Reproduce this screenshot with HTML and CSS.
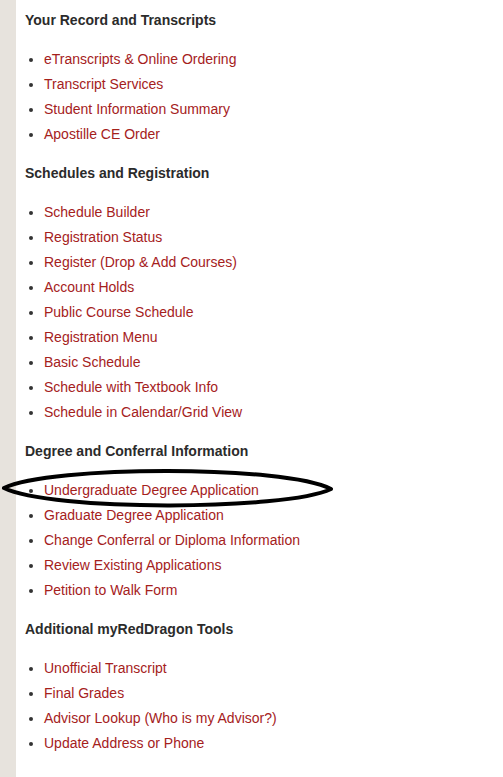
FILE: index.html
```html
<!DOCTYPE html>
<html>
<head>
<meta charset="utf-8">
<link rel="stylesheet" href="styles.css">
</head>
<body>
<div class="page">
  <div class="strip"></div>
  <div class="content">
    <h3 class="heading">Your Record and Transcripts</h3>
    <ul class="links">
      <li><a href="#">eTranscripts &amp; Online Ordering</a></li>
      <li><a href="#">Transcript Services</a></li>
      <li><a href="#">Student Information Summary</a></li>
      <li><a href="#">Apostille CE Order</a></li>
    </ul>
    <h3 class="heading">Schedules and Registration</h3>
    <ul class="links">
      <li><a href="#">Schedule Builder</a></li>
      <li><a href="#">Registration Status</a></li>
      <li><a href="#">Register (Drop &amp; Add Courses)</a></li>
      <li><a href="#">Account Holds</a></li>
      <li><a href="#">Public Course Schedule</a></li>
      <li><a href="#">Registration Menu</a></li>
      <li><a href="#">Basic Schedule</a></li>
      <li><a href="#">Schedule with Textbook Info</a></li>
      <li><a href="#">Schedule in Calendar/Grid View</a></li>
    </ul>
    <h3 class="heading">Degree and Conferral Information</h3>
    <ul class="links">
      <li><a href="#">Undergraduate Degree Application</a></li>
      <li><a href="#">Graduate Degree Application</a></li>
      <li><a href="#">Change Conferral or Diploma Information</a></li>
      <li><a href="#">Review Existing Applications</a></li>
      <li><a href="#">Petition to Walk Form</a></li>
    </ul>
    <h3 class="heading">Additional myRedDragon Tools</h3>
    <ul class="links">
      <li><a href="#">Unofficial Transcript</a></li>
      <li><a href="#">Final Grades</a></li>
      <li><a href="#">Advisor Lookup (Who is my Advisor?)</a></li>
      <li><a href="#">Update Address or Phone</a></li>
    </ul>
  </div>
  <svg class="circle" width="340" height="55" viewBox="0 0 340 55">
    <path d="M4,28 C50,5.5 285,5 331,29 C285,51 50,51 4,28 Z" fill="none" stroke="#000" stroke-width="4" stroke-linejoin="round"/>
  </svg>
</div>
</body>
</html>
```
FILE: styles.css
```css
html, body {
  margin: 0;
  padding: 0;
  background: #fff;
}
.page {
  position: relative;
  display: flex;
  min-height: 777px;
  font-family: "Liberation Sans", Arial, sans-serif;
  font-size: 14px;
}
.strip {
  width: 16px;
  flex: none;
  background: #e7e3dd;
}
.content {
  padding: 10px 0 0 9px;
}
.heading {
  margin: 0 0 16.5px 0;
  font-size: 14px;
  line-height: 20px;
  font-weight: bold;
  color: #2b2b2b;
}
.links {
  margin: 0 0 16.5px 0;
  padding-left: 19px;
  list-style: disc;
  color: #333;
}
.links li {
  line-height: 25px;
}
.links a {
  color: #a5211c;
  text-decoration: none;
}
.circle {
  position: absolute;
  left: 0;
  top: 460px;
}
```
